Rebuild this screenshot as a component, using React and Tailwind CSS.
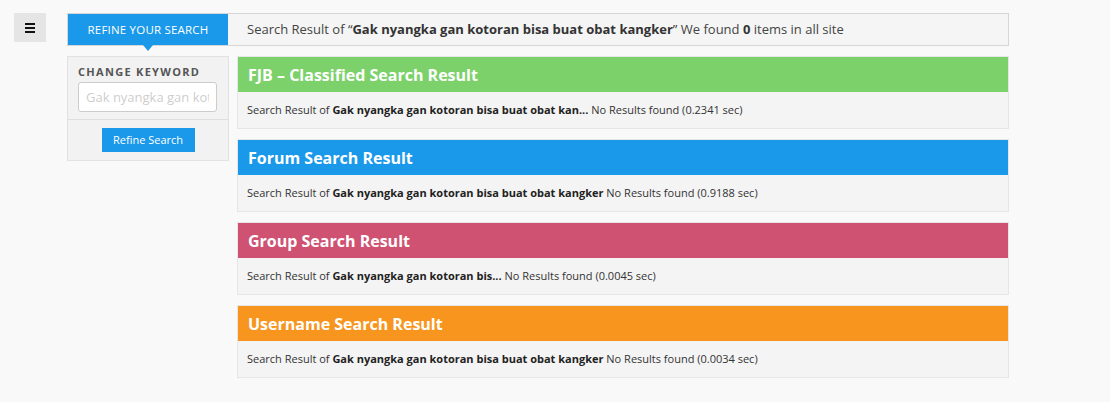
import React from 'react';

const keyword = 'Gak nyangka gan kotoran bisa buat obat kangker';

const results = [
  { title: 'FJB – Classified Search Result', bg: 'bg-[#7dd16b]', kw: 'Gak nyangka gan kotoran bisa buat obat kan...', time: '0.2341' },
  { title: 'Forum Search Result', bg: 'bg-[#1a98e9]', kw: keyword, time: '0.9188' },
  { title: 'Group Search Result', bg: 'bg-[#cf5273]', kw: 'Gak nyangka gan kotoran bis...', time: '0.0045' },
  { title: 'Username Search Result', bg: 'bg-[#f7951f]', kw: keyword, time: '0.0034' },
];

const ResultCard = ({ item }) => (
  <div className="border border-[#e6e6e6] bg-[#f4f4f4]">
    <div className={`${item.bg} h-[35px] flex items-center px-[10px]`}>
      <h2 className="text-white font-bold text-[16px] leading-none">{item.title}</h2>
    </div>
    <div className="h-[36px] flex items-center px-[9px] text-[11px] text-[#333]">
      <span>
        Search Result of <b className="text-[#222]">{item.kw}</b> No Results found ({item.time} sec)
      </span>
    </div>
  </div>
);

export default function App() {
  return (
    <div className="min-h-[402px] bg-[#f9f9f9] pt-[13px] flex" style={{ fontFamily: '"Open Sans", "Liberation Sans", sans-serif' }}>
      {/* menu toggle */}
      <div className="ml-[14px] w-[32px] h-[29px] bg-[#e5e5e5] flex flex-col items-center justify-center gap-[2px] shrink-0">
        <span className="block w-[10px] h-[2px] bg-[#111]"></span>
        <span className="block w-[10px] h-[2px] bg-[#111]"></span>
        <span className="block w-[10px] h-[2px] bg-[#111]"></span>
      </div>

      <div className="ml-[21px] w-[942px]">
        {/* top bar */}
        <div className="h-[33px] border border-[#d6d6d6] bg-[#f5f5f5] flex">
          <div className="relative w-[160px] bg-[#1a98e9] flex items-center justify-center">
            <span className="text-white text-[11.5px] tracking-[0.2px]">REFINE YOUR SEARCH</span>
            <span className="absolute left-[75px] -bottom-[6px] w-0 h-0 border-l-[5px] border-r-[5px] border-t-[6px] border-l-transparent border-r-transparent border-t-[#1a98e9]"></span>
          </div>
          <div className="flex items-center pl-[19px] text-[13px] text-[#444]">
            <span>
              Search Result of “<b className="text-[#333]">{keyword}</b>” We found <b className="text-[#333]">0</b> items in all site
            </span>
          </div>
        </div>

        <div className="mt-[10px] flex gap-[8px]">
          {/* sidebar */}
          <div className="w-[162px] h-[105px] border border-[#e2e2e2] bg-[#f2f2f2] shrink-0">
            <div className="px-[10px] pt-[8px] pb-[7px]">
              <div className="text-[11px] font-bold tracking-[1.3px] text-[#555] leading-[14px]">CHANGE KEYWORD</div>
              <input
                className="mt-[3px] w-[139px] h-[30px] rounded-[3px] border border-[#cccccc] bg-white px-[7px] text-[13px] text-[#999] outline-none"
                placeholder={keyword}
                readOnly
              />
            </div>
            <div className="border-t border-[#dedede] flex justify-center pt-[8px]">
              <button className="w-[93px] h-[24px] bg-[#1a98e9] text-white text-[11px]">Refine Search</button>
            </div>
          </div>

          {/* results */}
          <div className="flex-1 flex flex-col gap-[10px]">
            {results.map((r) => (
              <ResultCard key={r.title} item={r} />
            ))}
          </div>
        </div>
      </div>
    </div>
  );
}
